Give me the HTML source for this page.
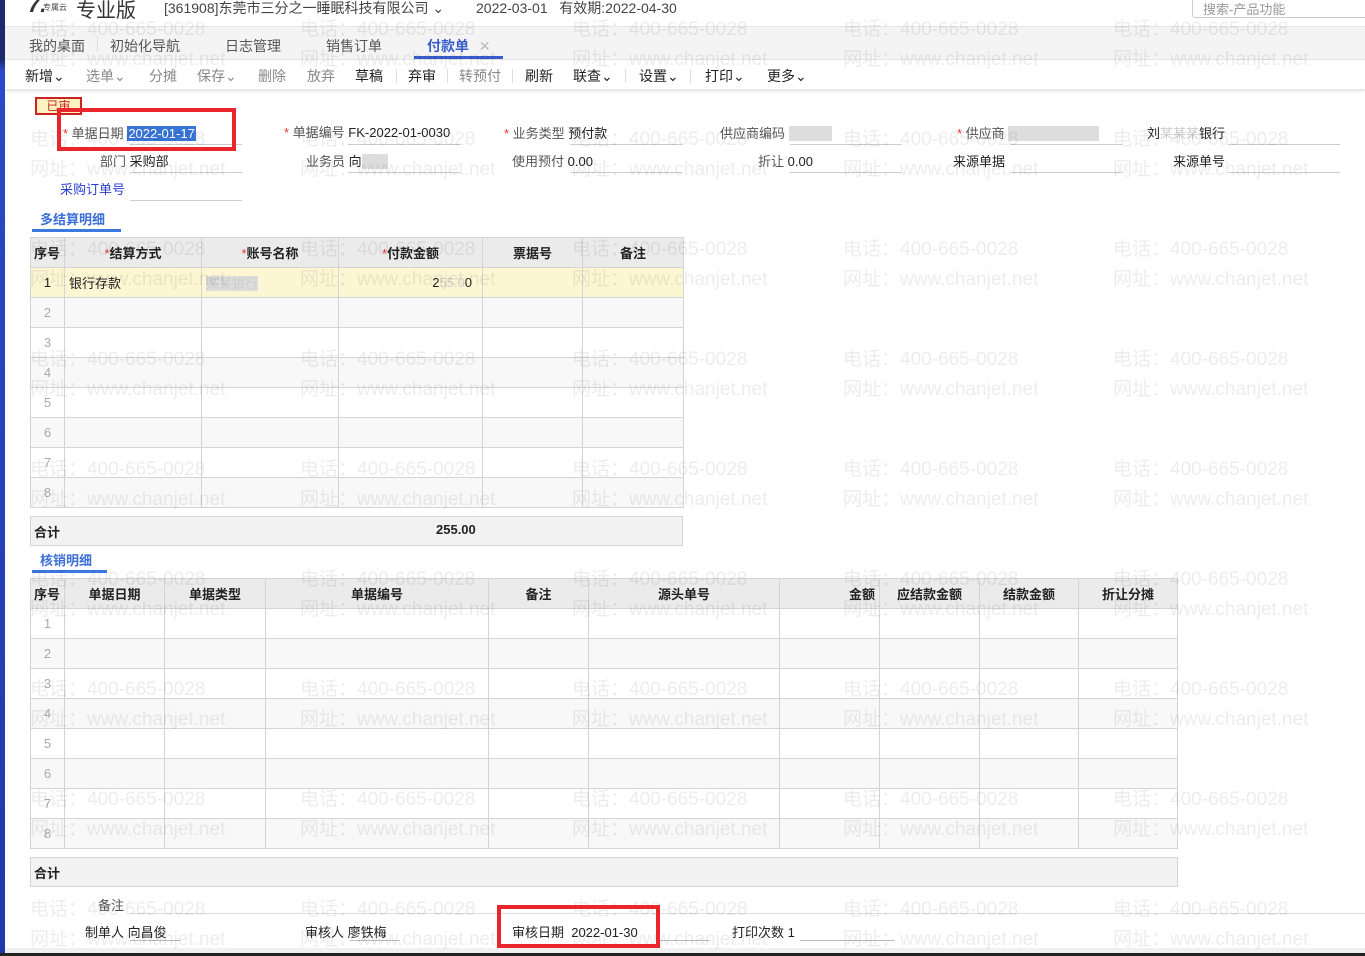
<!DOCTYPE html>
<html><head><meta charset="utf-8">
<style>
*{margin:0;padding:0;box-sizing:border-box}
body{width:1365px;height:956px;overflow:hidden;background:#fff;font-family:"Liberation Sans","Noto Sans CJK SC",sans-serif;font-size:13px;color:#222;position:relative}
.a{position:absolute;white-space:nowrap}
.wm{position:absolute;color:rgba(0,0,0,0.075);font-size:19px;white-space:nowrap;line-height:20px;z-index:6;pointer-events:none}
.strip{position:absolute;left:0;top:0;width:5px;height:956px;background:linear-gradient(#1b2a70 0,#1b2a70 60px,#2a48c8 70px,#2238a8 956px);z-index:10}
.lbl{color:#555}
.ul{position:absolute;height:1px;background:#ccc}
table{border-collapse:collapse;position:absolute;z-index:2;table-layout:fixed}
td,th{border:1px solid #d4d4d4;padding:0 4px;font-size:13px;height:30px;white-space:nowrap;overflow:hidden}
th{background:#ebebeb;font-weight:bold;color:#222}
td.n{color:#aaa;text-align:center}
.req{color:#e33;font-weight:normal}
.tb{position:absolute;top:66px;font-size:14px;color:#222;white-space:nowrap}
.g{color:#888}
.sep{position:absolute;top:69px;width:1px;height:14px;background:#ddd}
</style></head><body>
<div class="strip"></div>
<div id="wm"></div>
<div class="a" style="left:28px;top:-8px;font-size:22px;font-weight:bold;color:#333;font-style:italic">7.</div>
<div class="a" style="left:43px;top:2px;font-size:8px;color:#444">专属云</div>
<div class="a" style="left:76px;top:-6px;font-size:20px;color:#333">专业版</div>
<div class="a" style="left:164px;top:-2px;font-size:14px;color:#444">[361908]东莞市三分之一睡眠科技有限公司 ⌄</div>
<div class="a" style="left:476px;top:-2px;font-size:14px;color:#444">2022-03-01 &nbsp; 有效期:2022-04-30</div>
<div class="a" style="left:1192px;top:-12px;width:180px;height:30px;border:1px solid #ccc;border-radius:3px;padding:10px 10px;font-size:13px;color:#999">搜索-产品功能</div>
<div class="a" style="left:5px;top:26px;width:1360px;height:34px;background:#f4f4f4;border-top:1px solid #e4e4e4;border-bottom:1px solid #e4e4e4"></div>
<div class="a" style="left:29px;top:36px;font-size:14px;color:#555">我的桌面</div>
<div class="a" style="left:97px;top:36px;width:1px;height:16px;background:#ddd"></div>
<div class="a" style="left:110px;top:36px;font-size:14px;color:#555">初始化导航</div>
<div class="a" style="left:225px;top:36px;font-size:14px;color:#555">日志管理</div>
<div class="a" style="left:326px;top:36px;font-size:14px;color:#555">销售订单</div>
<div class="a" style="left:427px;top:36px;font-size:14px;color:#3a5ccc;font-weight:bold">付款单 <span style="color:#bbb;font-weight:normal;margin-left:6px">✕</span></div>
<div class="a" style="left:414px;top:56px;width:89px;height:3px;background:#3a5ccc"></div>
<div class="a" style="left:5px;top:61px;width:1360px;height:28px;background:#fff;box-shadow:0 2px 3px rgba(0,0,0,.12)"></div>
<div class="tb" style="left:25px">新增⌄</div>
<div class="tb g" style="left:86px">选单⌄</div>
<div class="tb g" style="left:149px">分摊</div>
<div class="tb g" style="left:197px">保存⌄</div>
<div class="tb g" style="left:258px">删除</div>
<div class="tb g" style="left:307px">放弃</div>
<div class="tb" style="left:355px">草稿</div>
<div class="sep" style="left:396px"></div>
<div class="tb" style="left:408px">弃审</div>
<div class="sep" style="left:447px"></div>
<div class="tb g" style="left:459px">转预付</div>
<div class="sep" style="left:512px"></div>
<div class="tb" style="left:525px">刷新</div>
<div class="tb" style="left:573px">联查⌄</div>
<div class="sep" style="left:625px"></div>
<div class="tb" style="left:639px">设置⌄</div>
<div class="sep" style="left:690px"></div>
<div class="tb" style="left:705px">打印⌄</div>
<div class="tb" style="left:767px">更多⌄</div>
<div class="a" style="left:35px;top:97px;width:47px;height:18px;background:#fcf3c0;border:2px solid #c22;color:#c22;font-size:12px;text-align:center;line-height:14px;z-index:3">已审</div>
<div class="a" style="left:57px;top:108px;width:179px;height:43px;border:4px solid #e8262b;z-index:7"></div>
<div class="a" style="left:63px;top:123px"><span class="req">* </span><span class="lbl">单据日期</span> <span style="background:#3875d7;color:#fff;padding:0 1px">2022-01-17</span></div>
<div class="a" style="left:284px;top:122px"><span class="req">* </span><span class="lbl">单据编号</span> FK-2022-01-0030</div>
<div class="a" style="left:504px;top:123px"><span class="req">* </span><span class="lbl">业务类型</span> 预付款</div>
<div class="a" style="left:720px;top:123px"><span class="lbl">供应商编码</span> <span style="background:#ddd;color:#ddd">000000</span></div>
<div class="a" style="left:957px;top:123px"><span class="req">* </span><span class="lbl">供应商</span> <span style="background:#ddd;color:#ddd">东莞市某某某某</span></div>
<div class="a" style="left:1147px;top:123px">刘<span style="color:#ccc">某某某</span>银行</div>
<div class="a" style="left:100px;top:151px"><span class="lbl">部门</span> 采购部</div>
<div class="a" style="left:306px;top:151px"><span class="lbl">业务员</span> 向<span style="background:#ddd;color:#ddd">某某</span></div>
<div class="a" style="left:512px;top:151px"><span class="lbl">使用预付</span> 0.00</div>
<div class="a" style="left:758px;top:151px"><span class="lbl">折让</span> 0.00</div>
<div class="a" style="left:953px;top:151px">来源单据</div>
<div class="a" style="left:1173px;top:151px">来源单号</div>
<div class="a" style="left:60px;top:179px;color:#2a3fd0">采购订单号</div>
<div class="ul" style="left:130px;top:144px;width:112px"></div>
<div class="ul" style="left:348px;top:144px;width:112px"></div>
<div class="ul" style="left:570px;top:144px;width:112px"></div>
<div class="ul" style="left:790px;top:144px;width:112px"></div>
<div class="ul" style="left:1010px;top:144px;width:112px"></div>
<div class="ul" style="left:1228px;top:144px;width:112px"></div>
<div class="ul" style="left:130px;top:172px;width:112px"></div>
<div class="ul" style="left:348px;top:172px;width:112px"></div>
<div class="ul" style="left:570px;top:172px;width:112px"></div>
<div class="ul" style="left:790px;top:172px;width:112px"></div>
<div class="ul" style="left:1010px;top:172px;width:112px"></div>
<div class="ul" style="left:1228px;top:172px;width:112px"></div>
<div class="ul" style="left:130px;top:200px;width:112px"></div>
<div class="a" style="left:40px;top:209px;color:#3a6fd8;font-weight:bold">多结算明细</div>
<div class="a" style="left:32px;top:229px;width:89px;height:3px;background:#3a7ae0"></div>
<table style="left:30px;top:237px;width:653px">
<colgroup><col style="width:34px"><col style="width:137px"><col style="width:137px"><col style="width:144px"><col style="width:100px"><col style="width:101px"></colgroup>
<tr><th style="text-align:left;padding:0 3px">序号</th><th><span class="req">*</span>结算方式</th><th><span class="req">*</span>账号名称</th><th><span class="req">*</span>付款金额</th><th>票据号</th><th>备注</th></tr>
<tr style="background:#fdf6d3"><td style="text-align:center">1</td><td>银行存款</td><td><span style="background:#ddd;color:#ccc">某某银行</span></td><td style="text-align:right;padding-right:10px">2<span style="color:#ccc">55.0</span>0</td><td></td><td></td></tr>
<tr style="background:#f8f8f8"><td class="n">2</td><td></td><td></td><td></td><td></td><td></td></tr>
<tr><td class="n">3</td><td></td><td></td><td></td><td></td><td></td></tr>
<tr style="background:#f8f8f8"><td class="n">4</td><td></td><td></td><td></td><td></td><td></td></tr>
<tr><td class="n">5</td><td></td><td></td><td></td><td></td><td></td></tr>
<tr style="background:#f8f8f8"><td class="n">6</td><td></td><td></td><td></td><td></td><td></td></tr>
<tr><td class="n">7</td><td></td><td></td><td></td><td></td><td></td></tr>
<tr style="background:#f8f8f8"><td class="n">8</td><td></td><td></td><td></td><td></td><td></td></tr>
</table>
<div class="a" style="left:30px;top:516px;width:653px;height:30px;background:#f2f2f2;border:1px solid #d4d4d4;z-index:2"></div>
<div class="a" style="left:34px;top:522px;font-weight:bold;z-index:3">合计</div>
<div class="a" style="left:436px;top:522px;font-weight:bold;z-index:3">255.00</div>
<div class="a" style="left:40px;top:550px;color:#3a6fd8;font-weight:bold">核销明细</div>
<div class="a" style="left:32px;top:570px;width:75px;height:3px;background:#3a7ae0"></div>
<table style="left:30px;top:578px;width:1147px">
<colgroup><col style="width:34px"><col style="width:100px"><col style="width:101px"><col style="width:223px"><col style="width:100px"><col style="width:191px"><col style="width:100px"><col style="width:100px"><col style="width:99px"><col style="width:99px"></colgroup>
<tr><th style="text-align:left;padding:0 3px">序号</th><th>单据日期</th><th>单据类型</th><th>单据编号</th><th>备注</th><th>源头单号</th><th style="text-align:right">金额</th><th>应结款金额</th><th>结款金额</th><th>折让分摊</th></tr>
<tr><td class="n">1</td><td></td><td></td><td></td><td></td><td></td><td></td><td></td><td></td><td></td></tr>
<tr style="background:#f8f8f8"><td class="n">2</td><td></td><td></td><td></td><td></td><td></td><td></td><td></td><td></td><td></td></tr>
<tr><td class="n">3</td><td></td><td></td><td></td><td></td><td></td><td></td><td></td><td></td><td></td></tr>
<tr style="background:#f8f8f8"><td class="n">4</td><td></td><td></td><td></td><td></td><td></td><td></td><td></td><td></td><td></td></tr>
<tr><td class="n">5</td><td></td><td></td><td></td><td></td><td></td><td></td><td></td><td></td><td></td></tr>
<tr style="background:#f8f8f8"><td class="n">6</td><td></td><td></td><td></td><td></td><td></td><td></td><td></td><td></td><td></td></tr>
<tr><td class="n">7</td><td></td><td></td><td></td><td></td><td></td><td></td><td></td><td></td><td></td></tr>
<tr style="background:#f8f8f8"><td class="n">8</td><td></td><td></td><td></td><td></td><td></td><td></td><td></td><td></td><td></td></tr>
</table>
<div class="a" style="left:30px;top:857px;width:1148px;height:30px;background:#f2f2f2;border:1px solid #d4d4d4;z-index:2"></div>
<div class="a" style="left:34px;top:863px;font-weight:bold;z-index:3">合计</div>
<div class="a" style="left:98px;top:895px;color:#555">备注</div>
<div class="ul" style="left:130px;top:913px;width:1235px;background:#ddd"></div>
<div class="a" style="left:85px;top:922px">制单人 向昌俊</div>
<div class="a" style="left:305px;top:922px">审核人 廖铁梅</div>
<div class="a" style="left:512px;top:922px;z-index:5">审核日期 &nbsp;2022-01-30</div>
<div class="a" style="left:732px;top:922px">打印次数 1</div>
<div class="ul" style="left:130px;top:940px;width:50px;background:#bbb"></div>
<div class="ul" style="left:350px;top:940px;width:50px;background:#bbb"></div>
<div class="ul" style="left:660px;top:940px;width:50px;background:#bbb"></div>
<div class="ul" style="left:800px;top:940px;width:95px;background:#bbb"></div>
<div class="a" style="left:497px;top:905px;width:163px;height:43px;border:4px solid #e8262b;z-index:7"></div>
<div class="a" style="left:5px;top:948px;width:1360px;height:5px;background:#f0f0f0"></div>
<div class="a" style="left:0;top:953px;width:1365px;height:3px;background:#222;z-index:11"></div>
<script>
var h='';var xs=[30,300,572,843,1113];var ys=[20,130,240,350,460,570,680,790,900];
ys.forEach(function(y){xs.forEach(function(x){h+='<div class="wm" style="left:'+x+'px;top:'+y+'px">电话：400-665-0028</div><div class="wm" style="left:'+x+'px;top:'+(y+30)+'px">网址：www.chanjet.net</div>';});});
document.getElementById('wm').innerHTML=h;
</script>
</body></html>
